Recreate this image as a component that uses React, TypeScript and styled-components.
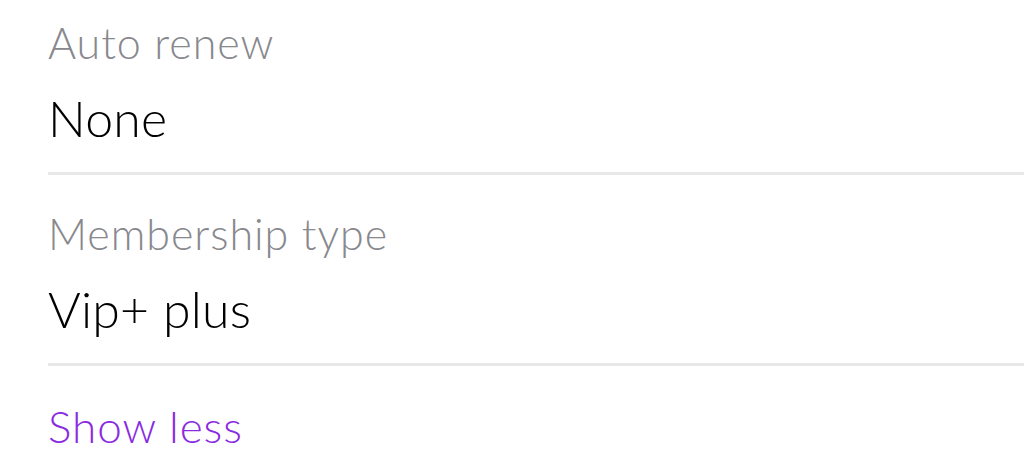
import styled, { createGlobalStyle } from 'styled-components';

const GlobalStyle = createGlobalStyle`
    html, body {
        margin: 0;
        padding: 0;
        background: #ffffff;
        overflow: hidden;
    }
    body {
        font-family: Lato, "Noto Sans", sans-serif;
        -webkit-font-smoothing: antialiased;
    }
`

const Details = styled.div`
    width: 1024px;
    height: 466px;
    padding-left: 48px;
    box-sizing: border-box;
    overflow: hidden;
`
const List = styled.div`
    margin-top: -16px;
`
const Row = styled.div`
    display: flex;
    flex-direction: column;
    gap: 20px;
    padding: 34px 0 24px 0;
    border-bottom: 3px solid #e8e8e8;
`
const Label = styled.div`
    color: #88888d;
    font-size: 43px;
    font-weight: 300;
    line-height: 50px;
    letter-spacing: 0.95px;
`
const Value = styled.div`
    color: #000000;
    font-size: 50px;
    font-weight: 300;
    line-height: 60px;
    letter-spacing: 0.2px;
`
const ToggleLink = styled.button`
    display: block;
    margin-top: 35px;
    padding: 0;
    border: none;
    background: none;
    color: #8a2be2;
    font-family: inherit;
    font-size: 44px;
    font-weight: 300;
    line-height: 50px;
    letter-spacing: 0.95px;
    cursor: pointer;
`

const fields = [
    { label: 'Auto renew', value: 'None' },
    { label: 'Membership type', value: 'Vip+ plus' },
];

export default function App() {
    return (
        <>
            <GlobalStyle />
            <Details>
                <List>
                    {fields.map((f) => (
                        <Row key={f.label}>
                            <Label>{f.label}</Label>
                            <Value>{f.value}</Value>
                        </Row>
                    ))}
                </List>
                <ToggleLink>Show less</ToggleLink>
            </Details>
        </>
    );
}
